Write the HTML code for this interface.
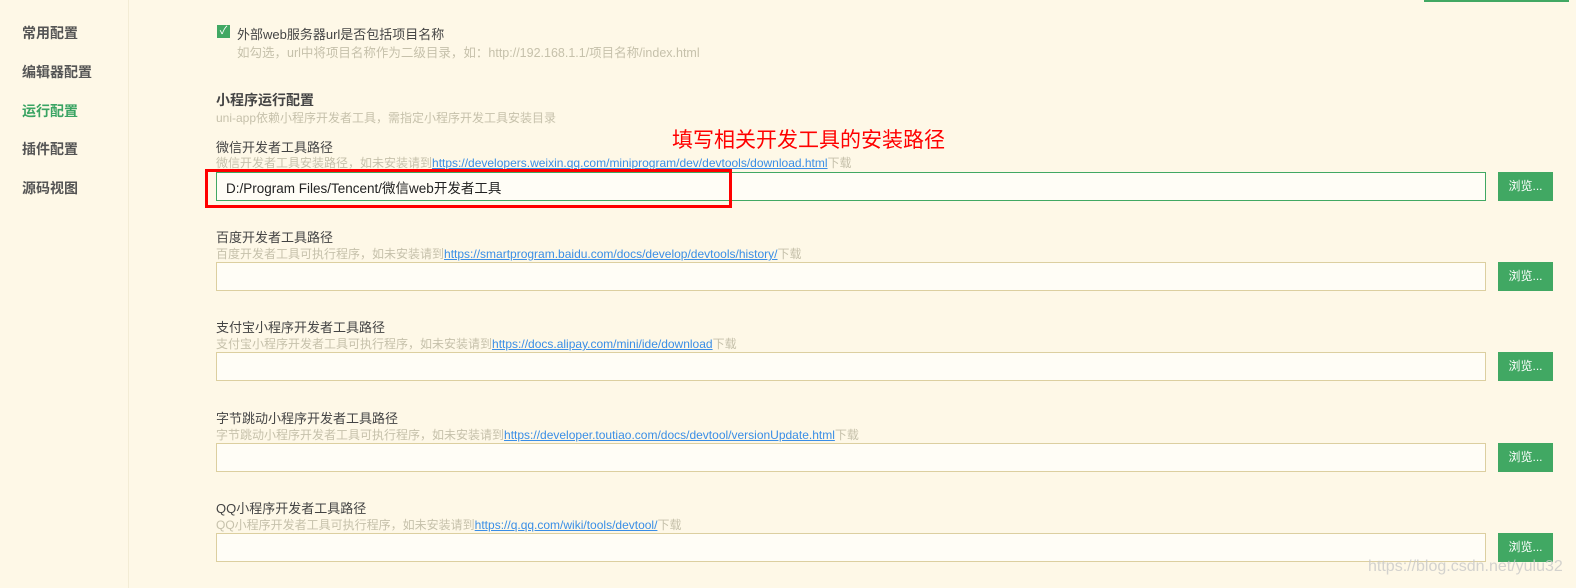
<!DOCTYPE html>
<html><head><meta charset="utf-8"><style>
*{margin:0;padding:0;box-sizing:border-box}
body{width:1576px;height:588px;background:#fef8e7;font-family:"Liberation Sans","Noto Sans CJK SC",sans-serif;position:relative;overflow:hidden;color:#333}
.a{position:absolute;white-space:nowrap}
.side{position:absolute;left:0;top:0;width:129px;height:588px;border-right:1px solid #f3ecd5}
.nav{position:absolute;left:22px;font-size:14px;font-weight:bold;color:#555}
.lbl{font-size:13px;color:#444}
.desc{font-size:12px;color:#c6c1ab}
.desc a{color:#3a8ee6;text-decoration:underline}
.in{position:absolute;left:216px;width:1270px;height:29px;border:1px solid #dccfa0;background:#fffdf6}
.btn{position:absolute;left:1498px;width:55px;height:29px;background:#41a863;color:#fff;font-size:12px;text-align:center;line-height:29px}
</style></head><body>
<div class="side"></div>
<div class="nav" style="top:23px">常用配置</div>
<div class="nav" style="top:62px">编辑器配置</div>
<div class="nav" style="top:101px;color:#3aa463">运行配置</div>
<div class="nav" style="top:139px">插件配置</div>
<div class="nav" style="top:178px">源码视图</div>
<div class="a" style="left:1424px;top:0;width:145px;height:2px;background:#41a863"></div>

<div class="a" style="left:217px;top:25px;width:13px;height:13px;background:#41a863;color:#fff;font-size:11px;line-height:13px;text-align:center">✓</div>
<div class="a lbl" style="left:237px;top:24px">外部web服务器url是否包括项目名称</div>
<div class="a desc" style="left:237px;top:42px;font-size:12.5px">如勾选，url中将项目名称作为二级目录，如：http://192.168.1.1/项目名称/index.html</div>

<div class="a" style="left:216px;top:90px;font-size:14px;font-weight:bold;color:#444">小程序运行配置</div>
<div class="a desc" style="left:216px;top:109px">uni-app依赖小程序开发者工具，需指定小程序开发工具安装目录</div>
<div class="a" style="left:672px;top:124px;font-size:21px;color:#f00">填写相关开发工具的安装路径</div>

<div class="a lbl" style="left:216px;top:137px">微信开发者工具路径</div>
<div class="a desc" style="left:216px;top:154px">微信开发者工具安装路径，如未安装请到<a>https://developers.weixin.qq.com/miniprogram/dev/devtools/download.html</a>下载</div>
<div class="in" style="top:172px;border-color:#41a863"></div>
<div class="a" style="left:226px;top:177px;font-size:13.5px;color:#222">D:/Program Files/Tencent/微信web开发者工具</div>
<div class="btn" style="top:172px">浏览...</div>
<div class="a" style="left:205px;top:169px;width:527px;height:39px;border:3px solid #f00"></div>

<div class="a lbl" style="left:216px;top:227px">百度开发者工具路径</div>
<div class="a desc" style="left:216px;top:245px">百度开发者工具可执行程序，如未安装请到<a>https://smartprogram.baidu.com/docs/develop/devtools/history/</a>下载</div>
<div class="in" style="top:262px"></div><div class="btn" style="top:262px">浏览...</div>

<div class="a lbl" style="left:216px;top:317px">支付宝小程序开发者工具路径</div>
<div class="a desc" style="left:216px;top:335px">支付宝小程序开发者工具可执行程序，如未安装请到<a>https://docs.alipay.com/mini/ide/download</a>下载</div>
<div class="in" style="top:352px"></div><div class="btn" style="top:352px">浏览...</div>

<div class="a lbl" style="left:216px;top:408px">字节跳动小程序开发者工具路径</div>
<div class="a desc" style="left:216px;top:426px">字节跳动小程序开发者工具可执行程序，如未安装请到<a>https://developer.toutiao.com/docs/devtool/versionUpdate.html</a>下载</div>
<div class="in" style="top:443px"></div><div class="btn" style="top:443px">浏览...</div>

<div class="a lbl" style="left:216px;top:498px">QQ小程序开发者工具路径</div>
<div class="a desc" style="left:216px;top:516px">QQ小程序开发者工具可执行程序，如未安装请到<a>https://q.qq.com/wiki/tools/devtool/</a>下载</div>
<div class="in" style="top:533px"></div><div class="btn" style="top:533px">浏览...</div>

<div class="a" style="left:1368px;top:558px;font-size:16px;color:rgba(200,200,200,0.8)">https://blog.csdn.net/yulu32</div>
</body></html>
